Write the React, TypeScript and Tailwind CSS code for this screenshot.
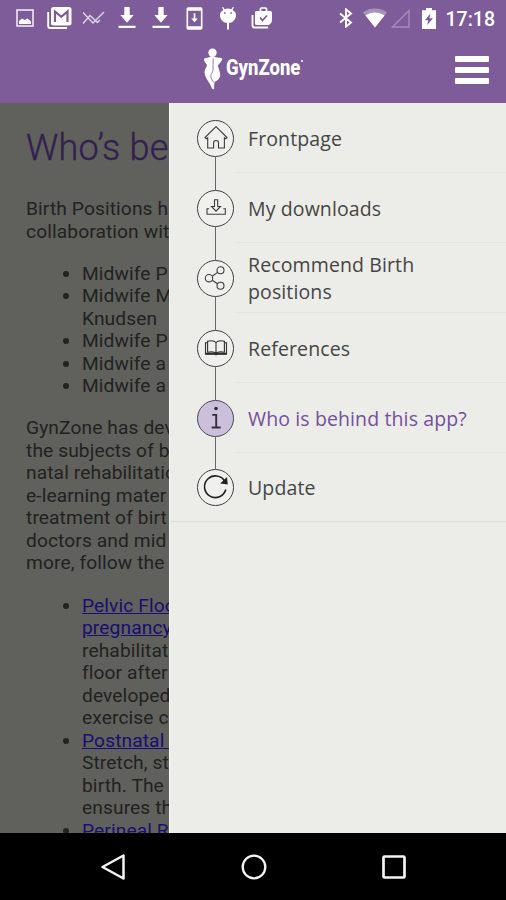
import type { ReactNode } from 'react';

type IconProps = {
    className?: string;
};

type MenuItem = {
    label: string;
    icon: ReactNode;
    active?: boolean;
};

const HomeIcon = () => (
    <svg viewBox="0 0 24 24" className="size-6" fill="none" stroke="#3c3c3c" strokeWidth="1.100">
        <path d="M12 .6 1 11.600l1.200 1.100 1.500-.9V22h5.900v-5.400c0-2.900 4.900-2.900 4.900 0V22h5.900V11.800l1.500.9 1.100-1.100L12 .6Z" />
    </svg>
);

const TrayIcon = () => (
    <svg viewBox="0 0 24 24" className="size-6" fill="none" stroke="#3c3c3c" strokeWidth="1.100">
        <path d="M10.500 3.800h3.200v6.700h2.800L12 15.200l-4.500-4.700h3V3.800Z" />
        <path d="M5 12.800H3v5.400h18.300v-5.400h-2" />
    </svg>
);

const ShareIcon = () => (
    <svg viewBox="0 0 24 24" className="size-6" fill="none" stroke="#3c3c3c" strokeWidth="1.100">
        <circle cx="5" cy="12.200" r="3.700" />
        <circle cx="16.500" cy="4.300" r="3.500" />
        <circle cx="16.500" cy="19.800" r="3.500" />
        <path d="m8.200 10.200 5.400-3.800M8.200 14.200l5.300 3.500" />
    </svg>
);

const BookIcon = () => (
    <svg viewBox="0 0 24 24" className="size-6" fill="none" stroke="#303030" strokeWidth="1.100">
        <path d="M12 6.500C10.500 4.700 6 4.700 3.600 5.200v11c3-.5 7-.4 8.400 1 1.400-1.400 5.400-1.500 8.400-1v-11C18 4.700 13.500 4.700 12 6.500Zm0 0v10.500" />
        <path d="M3.400 6.800H1.500v11.400h21V6.800h-1.900" />
        <path d="M2 17.700h8.500l1.500.8 1.500-.8H22" strokeWidth="1.800" />
    </svg>
);

const InfoIcon = () => (
    <svg viewBox="0 0 24 24" className="size-6" fill="none" stroke="#332d38" strokeWidth="1.900">
        <path d="M8.300 8.900h3.900v12.500M7.700 21.500h8.900" />
        <circle cx="12" cy="2.500" r="1.800" fill="#332d38" stroke="none" />
    </svg>
);

const RefreshIcon = () => (
    <svg viewBox="0 0 28 28" className="size-7 shrink-0" fill="none" stroke="#222" strokeWidth="1.600">
        <path d="M22.800 8.500A10.800 10.800 0 1 0 23.800 16.500" />
        <path d="m25 4 .8 7.600-7.600-1.200L25 4Z" fill="#222" stroke="none" />
    </svg>
);

const items: MenuItem[] = [
    { label: 'Frontpage', icon: <HomeIcon /> },
    { label: 'My downloads', icon: <TrayIcon /> },
    { label: 'Recommend Birth positions', icon: <ShareIcon /> },
    { label: 'References', icon: <BookIcon /> },
    { label: 'Who is behind this app?', icon: <InfoIcon />, active: true },
    { label: 'Update', icon: <RefreshIcon /> },
];

const DownloadIcon = ({ className }: IconProps) => (
    <svg viewBox="0 0 18 22" className={className} fill="#fff">
        <path d="M6.300 0h5.400v8h4L9 15.800 2.300 8h4V0ZM.5 18.800h17V21H.5z" />
    </svg>
);

function StatusBar() {
    return (
        <div className="flex h-9 items-center justify-between pr-[11px] pl-4">
            <div className="flex items-center">
                <svg viewBox="0 0 18 18" className="size-[18px]" fill="none">
                    <rect x="1" y="1" width="16" height="16" stroke="#eadff0" strokeWidth="1.700" />
                    <path d="M3 15v-3l3-2.500 2.500 1.500 3-1.500 3.500 3V15H3Z" fill="#fff" />
                </svg>
                <svg viewBox="0 0 25 22" className="ml-[13px] h-[22px] w-[25px]" fill="none">
                    <path d="M1.200 5v14a2 2 0 0 0 2 2H20" stroke="#fff" strokeWidth="1.900" />
                    <rect x="4" y="0" width="20.500" height="18.500" rx="2.500" fill="#fff" />
                    <path d="M8 15V4.500l6.300 5.300 6.200-5.300V15" stroke="#7d5c99" strokeWidth="2.200" />
                </svg>
                <svg viewBox="0 0 23 14" className="ml-[10px] h-[14px] w-[23px]" fill="none" stroke="#e2d5ea" strokeWidth="1.400">
                    <path d="m1 1.500 10 10.500L22 1M1 12.500 8 4.500l7.500 7L18 9M8 4.500" />
                </svg>
                <DownloadIcon className="ml-[13px] h-[22px] w-[18px]" />
                <DownloadIcon className="ml-4 h-[22px] w-[18px]" />
                <svg viewBox="0 0 17 24" className="ml-[16px] h-[23px] w-[17px]" fill="none">
                    <rect x="1" y="1" width="15" height="22" rx="1" stroke="#fff" strokeWidth="1.700" />
                    <path d="M1 1h15v3H1zM1 20h15v3H1z" fill="#fff" />
                    <path d="M7.600 6.500h1.800V12h2.600l-3.500 4-3.500-4h2.600z" fill="#fff" />
                </svg>
                <svg viewBox="0 0 18 24" className="ml-[16px] h-6 w-[18px]" fill="#fff">
                    <path d="M9 2.500c1.300 0 2.400.2 3.400.7L14 .8l.8.7-1.200 2.500C16 5.500 17 7 17 9c0 4.500-3.300 8-8 8s-8-3.500-8-8c0-2 1-3.500 3.300-5L3.200 1.500 4 .8l1.600 2.400c1-.5 2.100-.7 3.400-.7Z" />
                    <path d="M8 16h2v7.500H8z" />
                    <path d="M5 6.200h1.600v1.500H5zM11.300 6.200h1.600v1.500h-1.600z" fill="#7d5c99" />
                </svg>
                <svg viewBox="0 0 22 22" className="ml-[14px] size-[22px]" fill="none">
                    <path d="M1.500 8v10.500a2 2 0 0 0 2 2H17" stroke="#fff" strokeWidth="1.900" />
                    <path d="M9.500 4V2a1 1 0 0 1 1-1h4a1 1 0 0 1 1 1v2" stroke="#fff" strokeWidth="1.700" />
                    <path d="M4 5.500C4 4.500 4.500 4 5.500 4H19c1 0 2 .5 2 1.500V12c0 4-2 6-5 6H6c-1.500 0-2-1-2-2V5.500Z" fill="#fff" />
                    <path d="m9 10.500 2.500 3 4.500-5" stroke="#7d5c99" strokeWidth="1.800" />
                </svg>
            </div>
            <div className="flex items-center">
                <svg viewBox="0 0 14 20" className="h-5 w-[14px]" fill="none" stroke="#fff" strokeWidth="1.900">
                    <path d="m1 5.500 11 9L7 18.700V1.300l5 4.200-11 9" />
                </svg>
                <svg viewBox="0 0 24 20" className="ml-[10px] h-5 w-6">
                    <path d="M0 4.500C6.500-.8 17.500-.8 24 4.500L12 19.500 0 4.500Z" fill="#a992ba" />
                    <path d="M2.500 7.600c5.500-4.200 13.500-4.200 19 0L12 19.500 2.500 7.600Z" fill="#fff" />
                </svg>
                <svg viewBox="0 0 19 19" className="ml-1 size-[19px]" fill="none" stroke="#a58bb8" strokeWidth="1.400">
                    <path d="M18 1.500V18H1.500L18 1.500Z" />
                </svg>
                <svg viewBox="0 0 14 21" className="ml-[12px] h-[21px] w-[14px]">
                    <path d="M4 0h6v2.300h4V21H0V2.300h4V0Z" fill="#fff" />
                    <path d="M8.300 5.500 3 12.300h3.200L5.300 17l5.700-6.800H7.500l.8-4.700Z" fill="#7d5c99" />
                </svg>
                <span className="mt-[3px] ml-[10px] font-[Roboto] text-[19.500px] leading-none font-medium text-white">17:18</span>
            </div>
        </div>
    );
}

function Header() {
    return (
        <div className="flex h-[67px] items-center justify-between pr-[17px] pl-[203px]">
            <div className="flex items-center">
                <svg viewBox="0 0 20 42" className="h-[43px] w-5" fill="#fff">
                    <circle cx="9.500" cy="4.200" r="4.200" />
                    <path d="M7.500 8C6 9.500 3 9 1.300 10.100.2 11.500 2 14 4 16.500c-.3 2-1.700 3.500-2.300 5.500-.6 2.600.3 5.500 2.100 8.500 1.700 2.900 3.700 5.500 5.200 9.500.8 1.500 2.400.7 2.200-.8-.2-2.500 0-4 .6-6 2.700-1.200 4.900-3 5.400-5.700.4-3-1.200-6.500-2.400-10.500 2-2.200 4.400-4.800 4.600-6.800-.9-1.300-6.200-.7-8.400-2.200-1 .8-2.500.8-3.500 0Z" />
                    <path d="M10.200 10c-.5 4 .3 8-.2 12-.5 3-3 3.500-2 7 .8 2.500 2 2.500 2.500 5" fill="none" stroke="#7d5c99" strokeWidth="0.800" />
                </svg>
                <div className="mb-[3px] ml-[3px] flex w-[77px] items-center">
                    <span className="w-[75px] origin-left scale-x-[0.84] font-[Roboto] text-[22px] leading-none font-extrabold text-white">GynZone</span>
                    <span className="mb-[14px] size-[2px] shrink-0 rounded-full bg-white" />
                </div>
            </div>
            <div className="mt-px flex flex-col gap-[5px]">
                <span className="h-[6px] w-[34px] rounded-[1px] bg-white" />
                <span className="h-[6px] w-[34px] rounded-[1px] bg-white" />
                <span className="h-[6px] w-[34px] rounded-[1px] bg-white" />
            </div>
        </div>
    );
}

function Article() {
    return (
        <div className="w-[169px] shrink-0 overflow-hidden bg-[#60605d] pl-[26px] font-[Roboto] text-[19.200px] leading-[22.500px] tracking-[0.100px] whitespace-nowrap text-[#222221]">
            <h1 className="mt-[23px] mb-[27px] text-[36px] leading-[45px] font-light tracking-[0.200px] text-[#32214e] [-webkit-text-stroke:0.400px_#32214e]">
                Who’s be
            </h1>
            <p>
                Birth Positions h
                <br />
                collaboration wit
            </p>
            <ul className="my-[19.700px] list-disc pl-[56px]">
                <li>Midwife P</li>
                <li>
                    Midwife M
                    <br />
                    Knudsen
                </li>
                <li>Midwife P</li>
                <li>Midwife a</li>
                <li>Midwife a</li>
            </ul>
            <p>
                GynZone has dev
                <br />
                the subjects of b
                <br />
                natal rehabilitatio
                <br />
                e-learning mater
                <br />
                treatment of birt
                <br />
                doctors and mid
                <br />
                more, follow the
            </p>
            <ul className="my-[19.700px] list-disc pl-[56px]">
                <li>
                    <span className="text-[#1a0e70] underline">Pelvic Floo</span>
                    <br />
                    <span className="text-[#1a0e70] underline">pregnancy</span>
                    <br />
                    rehabilitat
                    <br />
                    floor after
                    <br />
                    developed
                    <br />
                    exercise c
                </li>
                <li>
                    <span className="text-[#1a0e70] underline">Postnatal &nbsp;</span>
                    <br />
                    Stretch, st
                    <br />
                    birth. The
                    <br />
                    ensures th
                </li>
                <li>
                    <span className="text-[#1a0e70] underline">Perineal R</span>
                </li>
            </ul>
        </div>
    );
}

function Drawer() {
    return (
        <nav className="flex-1 border-l border-white bg-[#ecede8] font-['Open_Sans'] text-[19.500px] leading-[27px] tracking-[0.120px] text-[#454545]">
            {items.map((item, i) => {
                const first = i === 0;
                const last = i === items.length - 1;
                return (
                    <div key={item.label} className={last ? 'flex h-[69px] border-b border-[#dcddd9]' : 'flex h-[70px]'}>
                        {/* Timeline rail with the icon in the middle */}
                        <div className="ml-[27px] flex w-[37px] flex-col items-center">
                            <span className={first ? 'w-px flex-1' : 'w-px flex-1 bg-[#666]'} />
                            <span
                                className={
                                    item.active
                                        ? 'flex size-[37px] items-center justify-center rounded-full border-[1.500px] border-[#4a4550] bg-[#cbc0dc]'
                                        : 'flex size-[37px] items-center justify-center rounded-full border border-[#3f3f3f] bg-[#f0f0ed]'
                                }
                            >
                                {item.icon}
                            </span>
                            <span className={last ? 'w-px flex-1' : 'w-px flex-1 bg-[#666]'} />
                        </div>
                        <div className={last ? 'flex flex-1 items-center pr-16 pl-[14px]' : 'flex flex-1 items-center border-b border-[#e5e6e2] pt-[1px] pr-8 pl-[14px]'}>
                            <span className={item.active ? 'whitespace-nowrap text-[#74509a]' : 'max-w-[190px]'}>{item.label}</span>
                        </div>
                    </div>
                );
            })}
        </nav>
    );
}

function NavBar() {
    return (
        <div className="flex h-[67px] items-center justify-between bg-black pr-[99px] pl-[100px]">
            <svg viewBox="0 0 26 28" className="h-7 w-[26px]" fill="none" stroke="#f4f4f4" strokeWidth="2.500" strokeLinejoin="round">
                <path d="M23.500 2.500v23L2.500 14l21-11.500Z" />
            </svg>
            <svg viewBox="0 0 26 26" className="size-[26px]" fill="none" stroke="#f4f4f4" strokeWidth="2.300">
                <circle cx="13" cy="13" r="11.300" />
            </svg>
            <svg viewBox="0 0 26 26" className="size-[26px]" fill="none" stroke="#f4f4f4" strokeWidth="2.700">
                <rect x="2.500" y="2.500" width="21" height="21" rx="1" />
            </svg>
        </div>
    );
}

export default function App() {
    return (
        <div className="flex h-[900px] w-[506px] flex-col overflow-hidden bg-black">
            <div className="bg-[#7d5c99]">
                <StatusBar />
                <Header />
            </div>
            <div className="flex h-[730px] overflow-hidden">
                <Article />
                <Drawer />
            </div>
            <NavBar />
        </div>
    );
}
